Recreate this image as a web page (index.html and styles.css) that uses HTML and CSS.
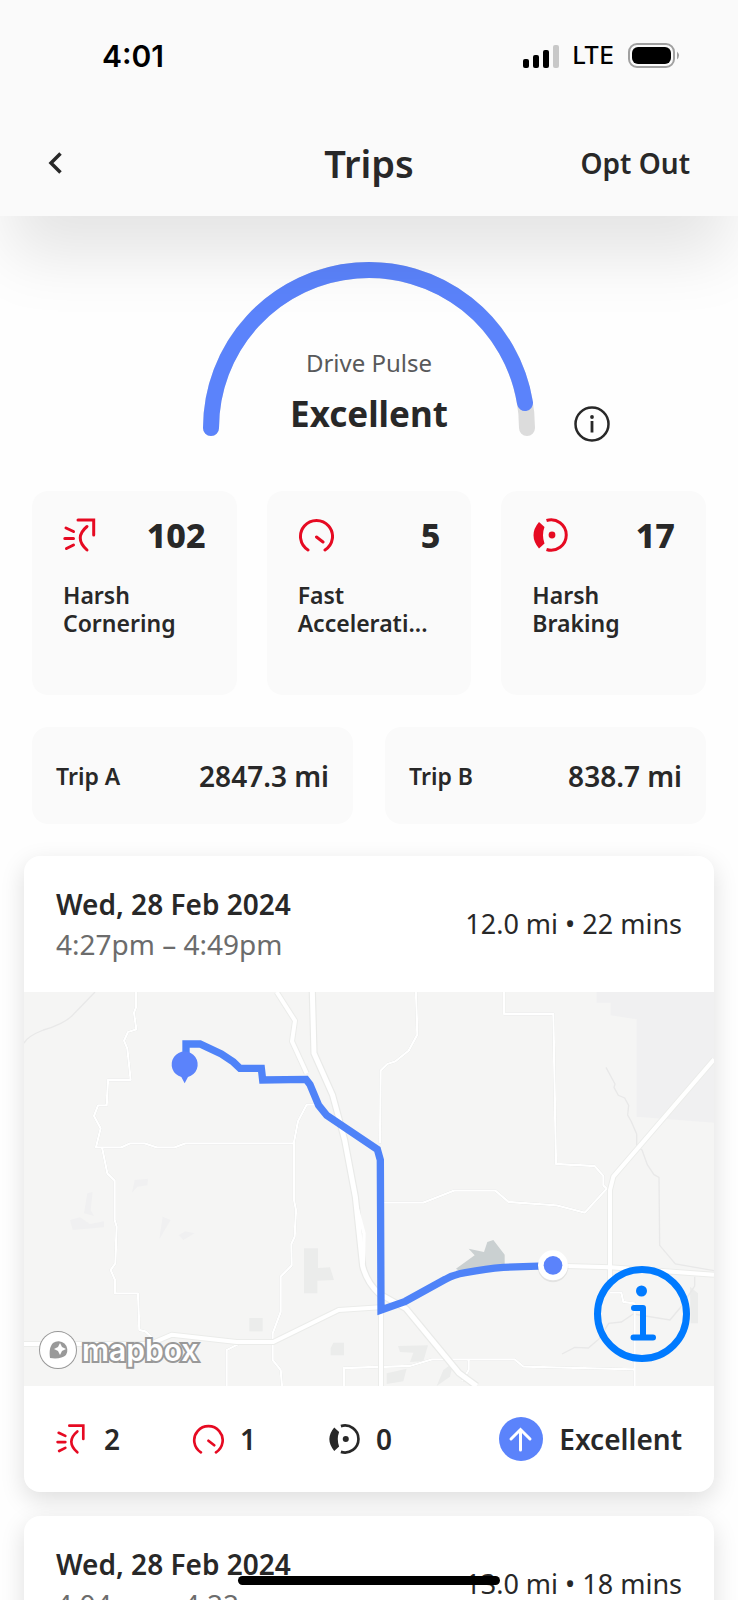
FILE: index.html
```html
<!DOCTYPE html>
<html lang="en">
<head>
    <meta charset="UTF-8">
    <meta name="viewport" content="width=device-width, initial-scale=1.0">
    <title>Trips</title>
    <link rel="stylesheet" href="styles.css">
</head>
<body>
    <!-- shared event icons -->
    <svg class="sprite" aria-hidden="true">
        <symbol id="icon-corner" viewBox="0 0 36 36">
            <path d="M15 3H30.700V18M24 9.500C15 17 15 25 24 33M3 11L10.500 14.500M1.800 21.500H10.500M3.500 31.500L10.500 28" fill="none" stroke="currentColor" stroke-width="3" stroke-linecap="round"/>
        </symbol>
        <symbol id="icon-speed" viewBox="0 0 36 36">
            <path d="M10 33A16 16 0 1 1 27 33M18.500 20L25 25" fill="none" stroke="currentColor" stroke-width="3" stroke-linecap="round"/>
        </symbol>
        <symbol id="icon-brake" viewBox="0 0 36 36">
            <path d="M14.500 3.500A15.200 15.200 0 1 1 14.500 32.500" fill="none" stroke="currentColor" stroke-width="3"/>
            <path d="M7 5L12.500 10Q9.500 18 12.500 26.500L7 31.500Q-4 18 7 5Z" fill="currentColor"/>
            <circle cx="20" cy="18" r="3.400" fill="currentColor"/>
        </symbol>
    </svg>

    <div class="screen">
        <header class="header">
            <div class="status-bar">
                <span class="status-time">4:01</span>
                <div class="status-right">
                    <svg class="signal" viewBox="0 0 36 23">
                        <rect x="0" y="14" width="6" height="9" rx="2"/>
                        <rect x="10" y="10" width="6" height="13" rx="2"/>
                        <rect x="20" y="5" width="6" height="18" rx="2"/>
                        <rect x="30" y="0" width="6" height="23" rx="2" fill="#c8c8c8"/>
                    </svg>
                    <span class="network">LTE</span>
                    <svg class="battery" viewBox="0 0 52 26">
                        <rect x="1" y="1" width="45" height="23" rx="8" fill="none" stroke="#a0a0a0" stroke-width="2"/>
                        <rect x="4" y="4" width="39" height="17" rx="6"/>
                        <path d="M49 8.500Q53 12.500 49 16.500Z" fill="#a0a0a0"/>
                    </svg>
                </div>
            </div>
            <nav class="nav-bar">
                <button class="back" type="button" aria-label="Back">
                    <svg viewBox="0 0 14 22"><path d="M12.500 1.500L3 11L12.500 20.500" fill="none" stroke="currentColor" stroke-width="3.500"/></svg>
                </button>
                <h1 class="title">Trips</h1>
                <button class="opt-out" type="button">Opt Out</button>
            </nav>
        </header>

        <main class="content">
            <section class="pulse">
                <svg class="gauge" viewBox="0 0 332 174">
                    <path d="M8 166A158 158 0 0 1 324 166" fill="none" stroke="#dcdcdc" stroke-width="16" stroke-linecap="round"/>
                    <path d="M8 166A158 158 0 0 1 322 141" fill="none" stroke="#5b83fb" stroke-width="16" stroke-linecap="round"/>
                </svg>
                <div class="pulse-text">
                    <p class="pulse-label">Drive Pulse</p>
                    <p class="pulse-value">Excellent</p>
                </div>
                <button class="pulse-info" type="button" aria-label="About Drive Pulse">
                    <svg viewBox="0 0 36 36"><circle cx="18" cy="18" r="16.500" fill="none" stroke="currentColor" stroke-width="2.500"/><circle cx="18" cy="11" r="1.900" fill="currentColor"/><path d="M18 15V26.500" stroke="currentColor" stroke-width="2.800"/></svg>
                </button>
            </section>

            <section class="events">
                <div class="event">
                    <div class="event-top">
                        <svg class="event-icon"><use href="#icon-corner"/></svg>
                        <span class="event-count">102</span>
                    </div>
                    <p class="event-name">Harsh<br>Cornering</p>
                </div>
                <div class="event">
                    <div class="event-top">
                        <svg class="event-icon"><use href="#icon-speed"/></svg>
                        <span class="event-count">5</span>
                    </div>
                    <p class="event-name">Fast<br>Accelerati...</p>
                </div>
                <div class="event">
                    <div class="event-top">
                        <svg class="event-icon"><use href="#icon-brake"/></svg>
                        <span class="event-count">17</span>
                    </div>
                    <p class="event-name">Harsh<br>Braking</p>
                </div>
            </section>

            <section class="meters">
                <div class="meter"><span class="meter-name">Trip A</span><span class="meter-value">2847.3 mi</span></div>
                <div class="meter"><span class="meter-name">Trip B</span><span class="meter-value">838.7 mi</span></div>
            </section>

            <section class="trips">
                <article class="trip">
                    <div class="trip-head">
                        <div>
                            <h2 class="trip-date">Wed, 28 Feb 2024</h2>
                            <p class="trip-time">4:27pm – 4:49pm</p>
                        </div>
                        <p class="trip-distance">12.0 mi • 22 mins</p>
                    </div>
                    <div class="map">
                        <svg class="map-canvas" viewBox="12 36 2070 1182" preserveAspectRatio="xMidYMid slice">
                            <!-- land use -->
                            <g fill="#f0f0f1">
                                <path d="M1730 36H2082V428L1850 410V118L1772 106V68H1730Z"/>
                                <path d="M150 720L180 712L210 732L252 724V742L158 750Z"/>
                                <path d="M202 640L218 636L212 690L222 708L192 700Z"/>
                                <path d="M344 600L384 596L382 616L352 620L336 638Z"/>
                                <path d="M428 710L452 720L418 778Z"/>
                                <path d="M476 766L496 754L524 760L490 780Z"/>
                            </g>
                            <g fill="#ebeceb">
                                <path d="M852 805H894V864L930 862L942 900L892 902V940H852Z"/>
                                <rect x="688" y="1014" width="40" height="40"/>
                                <path d="M940 1088H972V1126H932V1104Z"/>
                                <path d="M1134 1098L1224 1096L1210 1144L1170 1146L1180 1118L1140 1116Z"/>
                                <path d="M1100 1180L1160 1166L1150 1204L1100 1212Z"/>
                                <path d="M1270 1170L1300 1148L1290 1190L1250 1218Z"/>
                                <path d="M2010 920L2034 940V1030H2012Z"/>
                            </g>
                            <path d="M1308 866L1364 826L1346 806L1392 816L1402 786L1420 780L1454 824V856L1320 874Z" fill="#cad0d1"/>
                            <!-- creeks and boundaries -->
                            <g fill="none" stroke="#e8e8e8" stroke-width="4">
                                <path d="M12 190Q20 170 70 150Q140 130 165 98L225 36"/>
                                <path d="M1758 262L1785 312L1782 322L1795 346L1814 354L1826 376L1823 405L1834 425L1850 462L1850 500L1866 510L1882 554L1902 584L1917 592L1919 796L1966 852L2082 872"/>
                                <path d="M1626 1122L1664 1102L1705 1104L1738 1076L1766 1030L1804 1026L1840 1002L1950 1020L1980 984L2024 918V890"/>
                            </g>
                            <!-- minor roads -->
                            <g class="roads-minor">
                                <path d="M348 36V82L342 98L349 148L324 156L312 182L322 206L332 300H264L260 376H234L222 408L242 445L228 502H304L330 490H374L410 502H464L496 490H822"/>
                                <path d="M246 502L262 580L284 602V720L290 740L286 850L272 870L285 900V940H354L358 1050L376 1054L400 1076"/>
                                <path d="M890 374H860L834 424L822 486V660L828 690L824 770L814 792L815 856L782 890V996L758 1060V1140L782 1170L786 1218"/>
                                <path d="M1188 36L1192 164L1166 212L1126 244L1102 252L1082 272L1080 490"/>
                                <path d="M1452 36V102H1600L1608 552L1724 558L1750 588V616L1760 626L1694 698L1610 676L1466 666L1426 632L1302 632L1210 668H1090"/>
                                <path d="M620 1218V1110L656 1092"/>
                                <path d="M972 1218V1164L1170 1158L1236 1138H1484L1510 1160L1844 1168"/>
                                <path d="M1346 1138V1170L1326 1204"/>
                                <path d="M1770 938H1804L1810 966L1844 970V1218"/>
                            </g>
                            <!-- main roads -->
                            <g class="roads-edge">
                                <path d="M770 36L825 122L816 184L860 280"/>
                                <path d="M12 1092H390L456 1064L650 1086H760L956 990L1080 982"/>
                                <path d="M1083 990V1218M1640 858L1770 862L2082 884"/>
                                <path d="M2082 238L1780 590L1770 630V920"/>
                            </g>
                            <g class="roads-main">
                                <path d="M770 36L825 122L816 184L860 280"/>
                                <path d="M12 1092H390L456 1064L650 1086H760L956 990L1080 982"/>
                                <path d="M1083 990V1218M1640 858L1770 862L2082 884"/>
                                <path d="M2082 238L1780 590L1770 630V920"/>
                            </g>
                            <path class="highway-edge" d="M877 36L882 220L938 346L974 480L1006 650L1028 858Q1040 906 1076 940L1158 986L1318 1180L1370 1218"/>
                            <path class="highway" d="M877 36L882 220L938 346L974 480L1006 650L1028 858Q1040 906 1076 940L1158 986L1318 1180L1370 1218"/>
                            <path class="highway-lane" d="M1008 670L1032 760L1030 850"/>
                            <!-- driven route -->
                            <path class="route" d="M498 250V192H540L604 222L640 246L660 265H724L728 300L858 298L870 314L896 376L920 406L1072 508L1081 540L1083 990L1156 964L1276 898Q1300 884 1336 878Q1400 866 1450 862L1600 857"/>
                            <path d="M494 310L484 291A39 39 0 1 1 504 291Z" fill="#5b83fb"/>
                            <circle cx="1599" cy="861" r="46" fill="#000" opacity="0.070"/>
                            <circle cx="1599" cy="856" r="45" fill="#fff"/>
                            <circle cx="1599" cy="856" r="28" fill="#5b83fb"/>
                        </svg>
                        <a class="map-logo" href="#">
                            <svg viewBox="0 0 40 40"><circle cx="20" cy="20" r="18" fill="#fff" stroke="#999" stroke-width="2"/><path d="M12 28C11 21 12 16 15 13A9 9 0 0 1 28 25C25 28 19 29 12 28Z" fill="#999"/><path d="M22 13L24 17L28 19L24 21L22 25L20 21L16 19L20 17Z" fill="#fff"/></svg>
                            <span>mapbox</span>
                        </a>
                        <button class="map-info" type="button" aria-label="Map information">
                            <svg viewBox="0 0 96 96"><circle cx="48" cy="48" r="44.500" fill="none" stroke="currentColor" stroke-width="7"/><circle cx="47.500" cy="25" r="5.500" fill="currentColor"/><path d="M40 42H49V71M39.500 71.500H59" fill="none" stroke="currentColor" stroke-width="6" stroke-linecap="round" stroke-linejoin="round"/></svg>
                        </button>
                    </div>
                    <div class="trip-foot">
                        <ul class="counts">
                            <li class="count"><svg class="count-icon"><use href="#icon-corner"/></svg>2</li>
                            <li class="count"><svg class="count-icon"><use href="#icon-speed"/></svg>1</li>
                            <li class="count"><svg class="count-icon count-icon-none"><use href="#icon-brake"/></svg>0</li>
                        </ul>
                        <div class="rating">
                            <svg class="rating-icon" viewBox="0 0 44 44"><circle cx="22" cy="22" r="22" fill="#5b83fb"/><path d="M21.500 33V12.500M12 22L21.500 12.500L31 22" fill="none" stroke="#fff" stroke-width="3" stroke-linecap="round"/></svg>
                            <span>Excellent</span>
                        </div>
                    </div>
                </article>

                <article class="trip">
                    <div class="trip-head">
                        <div>
                            <h2 class="trip-date">Wed, 28 Feb 2024</h2>
                            <p class="trip-time">4:04pm – 4:22pm</p>
                        </div>
                        <p class="trip-distance">13.0 mi • 18 mins</p>
                    </div>
                </article>
            </section>
        </main>
        <div class="home-indicator"></div>
    </div>
</body>
</html>
```

FILE: styles.css
```css
* {
    box-sizing: border-box;
}
body {
    margin: 0;
    background-color: #fefefe;
    color: #282828;
    font-family: 'Noto Sans', sans-serif;
    font-size: 28px;
    line-height: 40px;
}
h1, h2, p, ul {
    margin: 0;
    padding: 0;
}
svg {
    display: block;
}
button {
    padding: 0;
    border: 0;
    background: none;
    color: inherit;
    font: inherit;
    cursor: pointer;
}
.sprite {
    position: absolute;
    width: 0;
    height: 0;
}
.screen {
    position: relative;
    height: 100vh;
    overflow: hidden;
}

/* header */
.header {
    position: relative;
    z-index: 1;
    height: 216px;
    background-color: #fafafa;
    box-shadow: 0 50px 60px -10px rgba(0, 0, 0, 0.1);
}
.status-bar {
    display: flex;
    align-items: center;
    justify-content: space-between;
    height: 112px;
    padding: 0 58px 0 102px;
    color: #000;
    font-family: 'Inter', sans-serif;
}
.status-time {
    font-size: 30px;
    font-weight: 600;
}
.status-right {
    display: flex;
    align-items: center;
    gap: 14px;
}
.signal {
    width: 36px;
    height: 23px;
}
.network {
    font-size: 24px;
    font-weight: 500;
}
.battery {
    width: 52px;
    height: 26px;
}
.nav-bar {
    display: grid;
    grid-template-columns: 1fr auto 1fr;
    align-items: center;
    height: 102px;
    padding: 0 48px;
}
.back {
    justify-self: start;
}
.back svg {
    width: 14px;
    height: 22px;
}
.title {
    font-size: 38px;
    font-weight: 600;
}
.opt-out {
    justify-self: end;
    font-weight: 600;
}

/* drive pulse gauge */
.pulse {
    position: relative;
    width: 332px;
    margin: 46px auto 55px;
}
.gauge {
    width: 100%;
}
.pulse-text {
    position: absolute;
    inset: 81px 0 0;
    text-align: center;
}
.pulse-label {
    color: #58595b;
    font-size: 24px;
}
.pulse-value {
    font-size: 35px;
    font-weight: 700;
    line-height: 62px;
}
.pulse-info {
    position: absolute;
    right: -75px;
    bottom: -6px;
}
.pulse-info svg {
    width: 36px;
    height: 36px;
}

/* event tiles */
.events {
    display: grid;
    grid-template-columns: repeat(3, 1fr);
    gap: 30px;
    margin: 0 32px 32px;
}
.event {
    min-height: 204px;
    padding: 24px 31px;
    border-radius: 16px;
    background-color: #fafafa;
}
.event-top {
    display: flex;
    align-items: center;
    justify-content: space-between;
    margin-bottom: 26px;
}
.event-icon {
    width: 36px;
    height: 36px;
    color: #e60a22;
}
.event-count {
    font-size: 34px;
    font-weight: 800;
}
.event-name {
    font-size: 23px;
    font-weight: 600;
    line-height: 28px;
    white-space: nowrap;
}

/* trip meters */
.meters {
    display: grid;
    grid-template-columns: 1fr 1fr;
    gap: 32px;
    margin: 0 32px 32px;
}
.meter {
    display: flex;
    align-items: center;
    justify-content: space-between;
    height: 97px;
    padding: 0 24px;
    border-radius: 16px;
    background-color: #fafafa;
    font-weight: 600;
}
.meter-name {
    font-size: 23px;
}

/* trip cards */
.trips {
    display: flex;
    flex-direction: column;
    gap: 24px;
    margin: 0 24px;
}
.trip {
    border-radius: 16px;
    background-color: #fff;
    box-shadow: 0 8px 24px rgba(0, 0, 0, 0.13);
}
.trip-head {
    display: flex;
    align-items: center;
    justify-content: space-between;
    height: 136px;
    padding: 0 32px;
}
.trip-date {
    font-size: 28px;
    font-weight: 600;
}
.trip-time {
    color: #6c6c6c;
}
.trip-distance {
    font-size: 27px;
}
.map {
    position: relative;
    background-color: #f5f5f4;
}
.map-canvas {
    width: 100%;
    height: auto;
}
.roads-minor,
.roads-main,
.roads-edge,
.highway,
.highway-edge,
.highway-lane {
    fill: none;
    stroke: #fff;
    stroke-linejoin: round;
}
.roads-minor {
    stroke-width: 7px;
    filter: drop-shadow(0 0 2px #cfd2d0);
}
.roads-main {
    stroke-width: 12px;
}
.roads-edge {
    stroke: #ebecea;
    stroke-width: 18px;
}
.highway {
    stroke-width: 15px;
}
.highway-edge {
    stroke: #e9eae8;
    stroke-width: 22px;
}
.highway-lane {
    stroke-width: 10px;
}
.route {
    fill: none;
    stroke: #4f83f8;
    stroke-width: 22px;
}
.map-logo {
    position: absolute;
    left: 14px;
    bottom: 16px;
    display: flex;
    align-items: center;
    gap: 4px;
    color: #fff;
    font-family: 'Inter', sans-serif;
    font-size: 30px;
    font-weight: 600;
    text-decoration: none;
    -webkit-text-stroke: 4px #999;
    paint-order: stroke fill;
}
.map-logo svg {
    width: 40px;
    height: 40px;
}
.map-info {
    position: absolute;
    right: 24px;
    bottom: 24px;
    color: #007aff;
}
.map-info svg {
    width: 96px;
    height: 96px;
}
.trip-foot {
    display: flex;
    align-items: center;
    justify-content: space-between;
    height: 106px;
    padding: 0 32px;
    font-weight: 600;
}
.counts {
    display: flex;
    gap: 72px;
    list-style: none;
}
.count {
    display: flex;
    align-items: center;
    gap: 16px;
}
.count-icon {
    width: 32px;
    height: 32px;
    color: #e60a22;
}
.count-icon-none {
    color: #282828;
}
.rating {
    display: flex;
    align-items: center;
    gap: 16px;
}
.rating-icon {
    width: 44px;
    height: 44px;
}

.home-indicator {
    position: absolute;
    left: 50%;
    bottom: 15px;
    width: 262px;
    height: 9px;
    border-radius: 5px;
    background-color: #000;
    transform: translateX(-50%);
}
```
